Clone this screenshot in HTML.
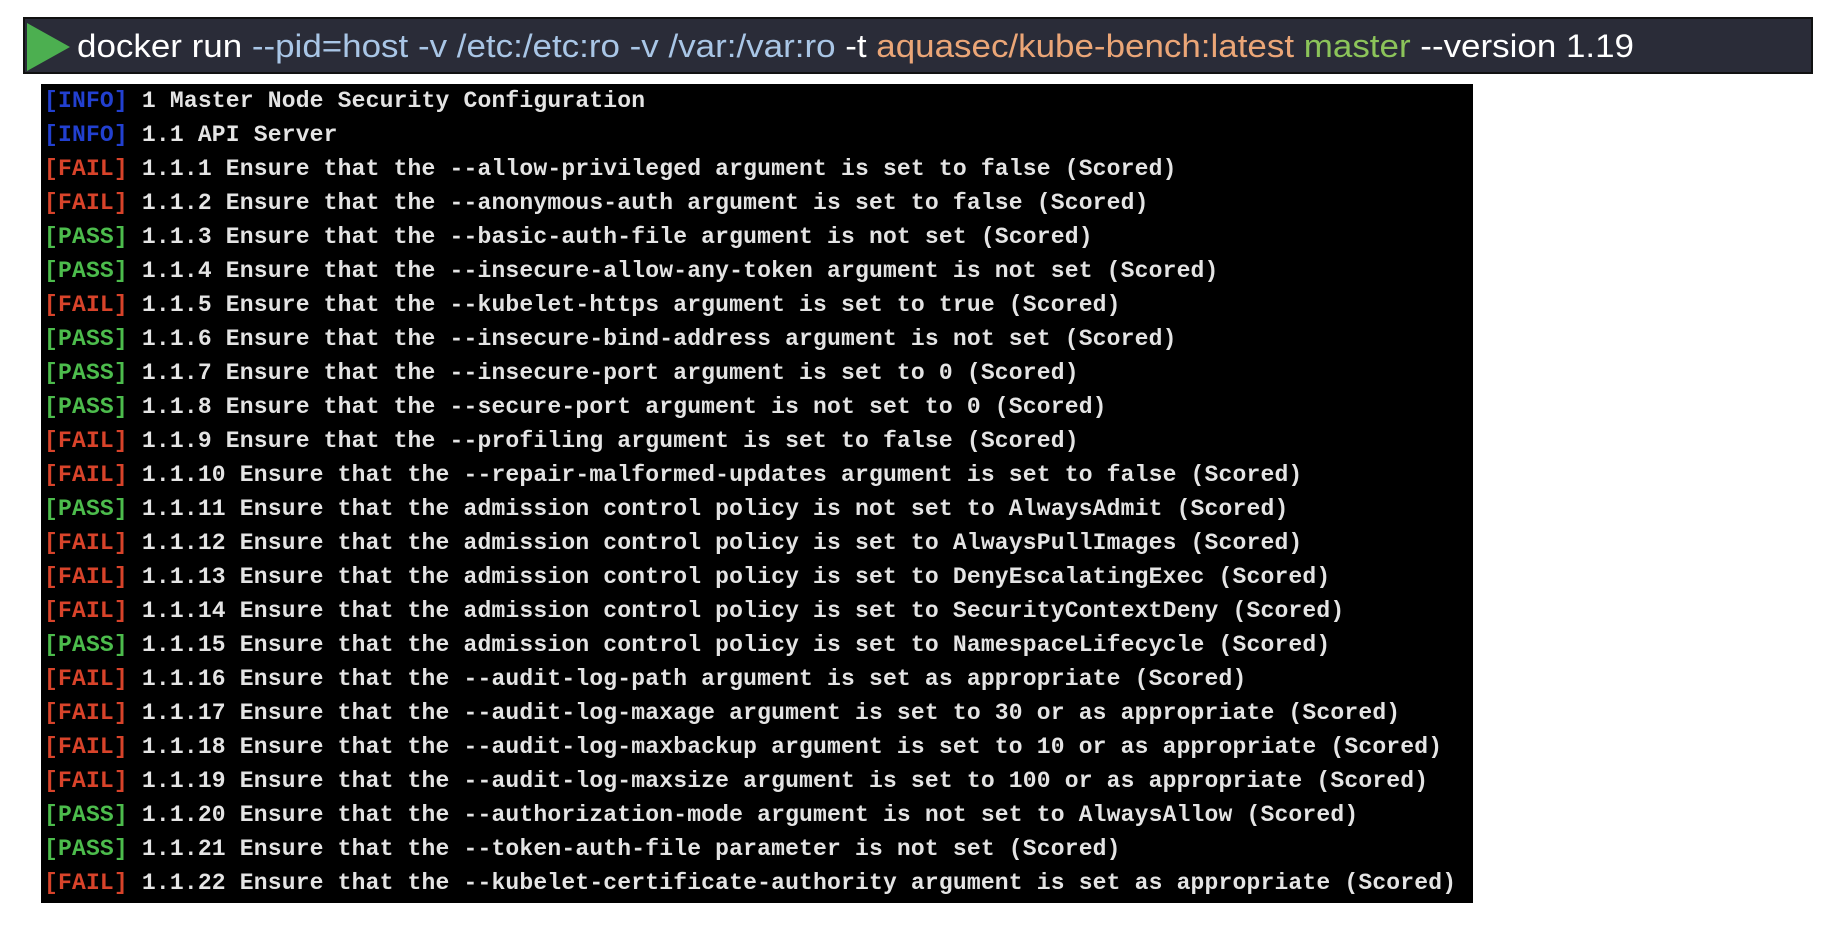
<!DOCTYPE html>
<html><head><meta charset="utf-8"><style>
html,body{margin:0;padding:0;background:#fff;width:1826px;height:928px;overflow:hidden}
.bar{position:absolute;left:23px;top:17px;width:1790px;height:57px;background:#2a2c38;border:2px solid #111;box-sizing:border-box}
.term{position:absolute;left:41px;top:84px;width:1432px;height:819px;background:#000;box-sizing:border-box;padding:0 0 0 3px;
font-family:"Liberation Mono",monospace;font-size:23px;letter-spacing:0.18px;line-height:34px;color:#e4e4e4;white-space:pre;font-weight:bold}
.i{color:#2240d0}.f{color:#d8432a}.p{color:#4cbc4c}
</style></head><body>
<div class="bar"></div>
<svg style="position:absolute;left:0;top:0" width="1826" height="80">
<polygon points="27,23 70,47 27,71" fill="#4caf50"/>
<text x="77" y="57" font-family="Liberation Sans, sans-serif" font-size="32" textLength="1557" lengthAdjust="spacingAndGlyphs" fill="#fff">docker run <tspan fill="#a9c6e6">--pid=host -v /etc:/etc:ro -v /var:/var:ro</tspan> -t <tspan fill="#eba677">aquasec/kube-bench:latest</tspan> <tspan fill="#8cc45a">master</tspan> --version 1.19</text>
</svg>
<div class="term"><span class="i">[INFO]</span> 1 Master Node Security Configuration
<span class="i">[INFO]</span> 1.1 API Server
<span class="f">[FAIL]</span> 1.1.1 Ensure that the --allow-privileged argument is set to false (Scored)
<span class="f">[FAIL]</span> 1.1.2 Ensure that the --anonymous-auth argument is set to false (Scored)
<span class="p">[PASS]</span> 1.1.3 Ensure that the --basic-auth-file argument is not set (Scored)
<span class="p">[PASS]</span> 1.1.4 Ensure that the --insecure-allow-any-token argument is not set (Scored)
<span class="f">[FAIL]</span> 1.1.5 Ensure that the --kubelet-https argument is set to true (Scored)
<span class="p">[PASS]</span> 1.1.6 Ensure that the --insecure-bind-address argument is not set (Scored)
<span class="p">[PASS]</span> 1.1.7 Ensure that the --insecure-port argument is set to 0 (Scored)
<span class="p">[PASS]</span> 1.1.8 Ensure that the --secure-port argument is not set to 0 (Scored)
<span class="f">[FAIL]</span> 1.1.9 Ensure that the --profiling argument is set to false (Scored)
<span class="f">[FAIL]</span> 1.1.10 Ensure that the --repair-malformed-updates argument is set to false (Scored)
<span class="p">[PASS]</span> 1.1.11 Ensure that the admission control policy is not set to AlwaysAdmit (Scored)
<span class="f">[FAIL]</span> 1.1.12 Ensure that the admission control policy is set to AlwaysPullImages (Scored)
<span class="f">[FAIL]</span> 1.1.13 Ensure that the admission control policy is set to DenyEscalatingExec (Scored)
<span class="f">[FAIL]</span> 1.1.14 Ensure that the admission control policy is set to SecurityContextDeny (Scored)
<span class="p">[PASS]</span> 1.1.15 Ensure that the admission control policy is set to NamespaceLifecycle (Scored)
<span class="f">[FAIL]</span> 1.1.16 Ensure that the --audit-log-path argument is set as appropriate (Scored)
<span class="f">[FAIL]</span> 1.1.17 Ensure that the --audit-log-maxage argument is set to 30 or as appropriate (Scored)
<span class="f">[FAIL]</span> 1.1.18 Ensure that the --audit-log-maxbackup argument is set to 10 or as appropriate (Scored)
<span class="f">[FAIL]</span> 1.1.19 Ensure that the --audit-log-maxsize argument is set to 100 or as appropriate (Scored)
<span class="p">[PASS]</span> 1.1.20 Ensure that the --authorization-mode argument is not set to AlwaysAllow (Scored)
<span class="p">[PASS]</span> 1.1.21 Ensure that the --token-auth-file parameter is not set (Scored)
<span class="f">[FAIL]</span> 1.1.22 Ensure that the --kubelet-certificate-authority argument is set as appropriate (Scored)</div>
</body></html>
